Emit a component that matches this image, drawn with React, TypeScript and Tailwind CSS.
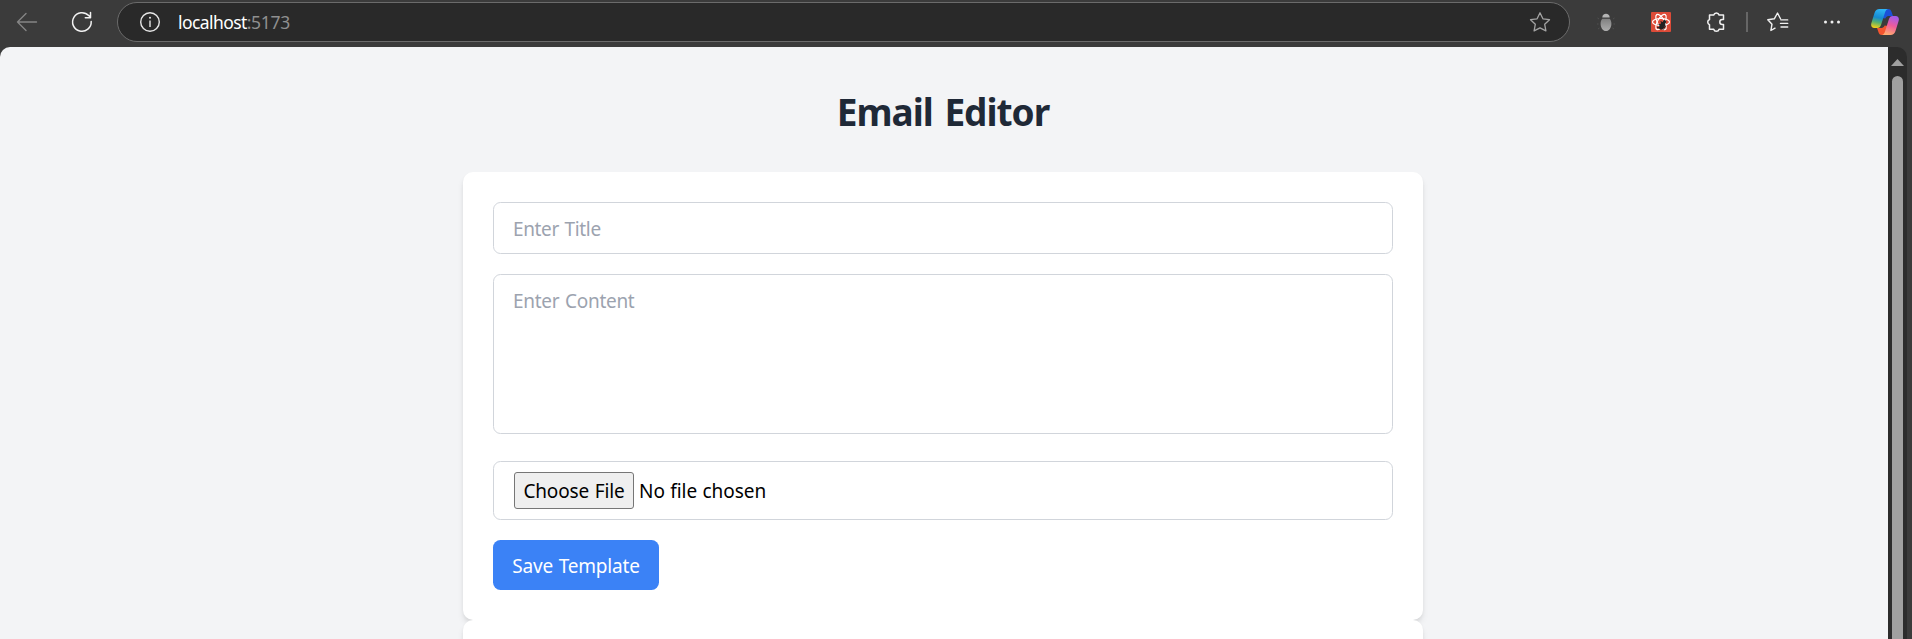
import React from "react";

function BackIcon() {
  return (
    <svg className="h-6 w-6" viewBox="0 0 24 24" fill="none" stroke="#858585" strokeWidth="1.4" strokeLinecap="round" strokeLinejoin="round">
      <path d="M21.5 12H2.5M11 3.5L2.5 12l8.5 8.5" />
    </svg>
  );
}

function ReloadIcon() {
  return (
    <svg className="h-6 w-6" viewBox="0 0 24 24" fill="none" stroke="#f2f2f2" strokeWidth="1.5" strokeLinecap="round" strokeLinejoin="round">
      <path d="M21.2 11.5A9.3 9.3 0 1 1 18.700 5.600L20.500 7.500M20.500 2.500v5.200h-5.200" />
    </svg>
  );
}

function InfoIcon() {
  return (
    <svg className="h-6 w-6" viewBox="0 0 24 24" fill="none" stroke="#e6e6e6" strokeWidth="1.4">
      <circle cx="12" cy="12" r="9.3" />
      <path d="M12 10.5v6.5" />
      <circle cx="12" cy="7.8" r="1" fill="#e6e6e6" stroke="none" />
    </svg>
  );
}

function StarIcon() {
  return (
    <svg className="h-6 w-6" viewBox="0 0 24 24" fill="none" stroke="#a3a3a3" strokeWidth="1.3" strokeLinejoin="round">
      <path d="M12 2.8l2.9 6 6.6.9-4.8 4.6 1.2 6.600-5.900-3.100-5.900 3.100 1.200-6.600L2.500 9.700l6.600-.9z" />
    </svg>
  );
}

function BugIcon() {
  return (
    <svg className="h-6 w-6" viewBox="0 0 24 24">
      <defs>
        <linearGradient id="bug" x1="0" y1="0" x2="0" y2="1">
          <stop offset="0" stopColor="#808080" />
          <stop offset="1" stopColor="#adadad" />
        </linearGradient>
      </defs>
      <path d="M5 9L3.500 8M4.500 14H3M5.500 18l-1.500 1M19 9l1.500-1M19.500 14H21M18.500 18l1.500 1" stroke="#505050" strokeWidth="1" />
      <path d="M8.300 7.500C8.300 5 10 3.800 12 3.800s3.700 1.200 3.700 3.700z" fill="#b5b5b5" />
      <path d="M8.300 8.700h7.400c1.200 1.300 1.700 3 1.700 5 0 4-2.300 7.300-5.400 7.300s-5.400-3.300-5.400-7.300c0-2 .5-3.700 1.700-5z" fill="url(#bug)" />
    </svg>
  );
}

function ReactBugIcon() {
  return (
    <svg className="h-5 w-5" viewBox="0 0 20 20" fill="none">
      <rect width="20" height="20" rx="1" fill="#dc4b38" />
      <g stroke="#fff" strokeWidth="1.2">
        <ellipse cx="10" cy="10" rx="8.500" ry="3.500" />
        <ellipse cx="10" cy="10" rx="8.500" ry="3.500" transform="rotate(60 10 10)" />
        <ellipse cx="10" cy="10" rx="8.500" ry="3.500" transform="rotate(120 10 10)" />
      </g>
      <g transform="rotate(30 11 13)" stroke="#222" strokeWidth="1.100">
        <ellipse cx="11.500" cy="13.500" rx="2" ry="3.600" fill="#222" />
        <circle cx="11.500" cy="8.800" r="1.100" fill="#222" />
        <path d="M8 10.500l7 2M7.700 14h7.800M8 17.500l7-2" />
      </g>
    </svg>
  );
}

function PuzzleIcon() {
  return (
    <svg className="h-6 w-6" viewBox="0 0 24 24" fill="none" stroke="#f0f0f0" strokeWidth="1.500" strokeLinejoin="round">
      <path d="M5.500 5h4.200a2.800 2.800 0 0 1 5.400 0h4.400v4.600h-1.200a2.500 2.500 0 0 0 0 5h1.200v4.700h-4.400a2.800 2.800 0 0 1-5.400 0H5.500v-4.600a2.800 2.800 0 0 1 0-5.200z" />
    </svg>
  );
}

function FavoritesIcon() {
  return (
    <svg className="h-6 w-6" viewBox="0 0 24 24" fill="none" stroke="#f0f0f0" strokeWidth="1.400" strokeLinecap="round" strokeLinejoin="round">
      <path d="M8 18.200l-4.100 2.300 1.100-6.300L.800 9.700l6.500-.9L10.500 3l3 5.800M14 9.900h6.700M13.500 13.400h7.200M14 17h6.700" transform="translate(1 0)" />
    </svg>
  );
}

function CopilotIcon() {
  return (
    <svg className="h-[26px] w-7" viewBox="0 0 28 26">
      <defs>
        <linearGradient id="coolRibbon" x1="0.5" y1="0" x2="0.3" y2="1">
          <stop offset="0" stopColor="#2eb4f5" />
          <stop offset="0.45" stopColor="#168ad0" />
          <stop offset="0.7" stopColor="#56b070" />
          <stop offset="1" stopColor="#f4cf18" />
        </linearGradient>
        <linearGradient id="warmRibbon" x1="0.7" y1="0" x2="0.4" y2="1">
          <stop offset="0" stopColor="#a05cf0" />
          <stop offset="0.5" stopColor="#ee5b9b" />
          <stop offset="1" stopColor="#ffab70" />
        </linearGradient>
      </defs>
      <path d="M14 0h3c2.200 0 3 1 3.600 3L22 7h-3.500c-2 0-3.300.5-4.200 2.500L11 9z" fill="#1b50d8" />
      <path d="M14 26h-3c-2.200 0-3-1-3.600-3L6 19h3.500c2 0 3.300-.5 4.200-2.500L17 17z" fill="#f4552f" />
      <path d="M8.500 0H17c-1.700.4-2.400 1.700-3 3.500L10.200 15.500C9.400 18 8.300 19 6.300 19H3.500C.5 19-.4 16.700.4 14L3.500 4C4.300 1.300 6 0 8.500 0z" fill="url(#coolRibbon)" />
      <path d="M19.500 26H11c1.700-.4 2.400-1.700 3-3.500l3.800-12C18.600 8 19.700 7 21.700 7h2.800c3 0 3.900 2.300 3.100 5L24.500 22c-.8 2.700-2.500 4-5 4z" fill="url(#warmRibbon)" />
    </svg>
  );
}

function BrowserBar() {
  return (
    <header className="flex h-[47px] shrink-0 items-start bg-[#3b3b3b] pt-0.5">
      <div className="flex h-10 w-[117px] items-center gap-[31px] pl-[15px]">
        <BackIcon />
        <ReloadIcon />
      </div>
      <div className="flex h-10 w-[1453px] items-center rounded-full border border-[#6b6b6b] bg-[#292929] pr-[17px] pl-5">
        <InfoIcon />
        <div className="ml-4 flex-1 font-['Noto_Sans'] text-[17.5px] tracking-[-0.58px] text-white">
          localhost<span className="tracking-[-0.3px] text-[#8f8f8f]">:5173</span>
        </div>
        <StarIcon />
      </div>
      <div className="flex h-10 flex-1 items-center">
        <div className="ml-6 flex"><BugIcon /></div>
        <div className="ml-[33px] flex"><ReactBugIcon /></div>
        <div className="ml-[33px] flex"><PuzzleIcon /></div>
        <div className="ml-[18px] h-5 w-0.5 bg-[#666]" />
        <div className="ml-[18px] flex"><FavoritesIcon /></div>
        <svg className="ml-[34px] h-4 w-4" viewBox="0 0 16 16" fill="#f0f0f0">
          <circle cx="1.5" cy="8" r="1.5" />
          <circle cx="8" cy="8" r="1.5" />
          <circle cx="14.5" cy="8" r="1.5" />
        </svg>
        <div className="ml-[31px] flex"><CopilotIcon /></div>
      </div>
    </header>
  );
}

function Scrollbar() {
  return (
    <div className="flex w-6 shrink-0 bg-[#3b3b3b]">
      <div className="flex w-[19px] flex-col items-center rounded-tr-[10px] bg-[#2c2c2c] pt-3">
        <svg className="h-[7px] w-[13px]" viewBox="0 0 13 7" fill="#a0a0a0"><path d="M6.500 0L13 7H0z" /></svg>
        <div className="mt-2.5 w-[11px] flex-1 rounded-t-full bg-[#a0a0a0]" />
      </div>
    </div>
  );
}

const field = "w-full rounded-[7.5px] border border-[#d1d5db]";
const placeholder = "placeholder:text-[#9ca3af] placeholder:opacity-100";

export default function App() {
  return (
    <div className="flex h-[639px] w-[1912px] flex-col overflow-hidden bg-[#3b3b3b] font-['Noto_Sans','Open_Sans',sans-serif]">
      <BrowserBar />
      <div className="flex min-h-0 flex-1">
        <main className="flex min-w-0 flex-1 flex-col items-center overflow-hidden rounded-tl-[10px] bg-[#f3f4f6] pt-10 pr-0.5">
          <h1 className="h-[45px] text-[37px] leading-[49px] font-bold tracking-[-1px] [word-spacing:3px] whitespace-nowrap text-[#1f2937]">Email Editor</h1>
          <section className="mt-10 flex h-[448px] w-[960px] shrink-0 flex-col items-start rounded-[10px] bg-white p-[30px] shadow-[0_5px_7.5px_-1px_rgba(0,0,0,0.1),0_2.5px_5px_-2.5px_rgba(0,0,0,0.1)]">
            <input className={`${field} ${placeholder} h-[52px] px-[19px] pt-0.5 text-[19px] tracking-[-0.35px] [word-spacing:1px]`} placeholder="Enter Title" />
            <textarea className={`${field} ${placeholder} mt-5 h-40 resize-none px-[19px] py-[11px] text-[19px] leading-[30px] tracking-[-0.28px] [word-spacing:1px]`} placeholder="Enter Content" />
            <div className={`${field} mt-[27px] flex h-[59px] items-center px-5 text-[19px] whitespace-nowrap text-black`}>
              <button className="h-[37px] w-[120px] rounded-[3px] border border-[#767676] bg-[#efefef] pt-px tracking-[-0.15px] [word-spacing:1px]">Choose File</button>
              <span className="ml-[5px] pt-0.5 tracking-[-0.05px] [word-spacing:0.5px]">No file chosen</span>
            </div>
            <button className="mt-5 h-[50px] w-[166px] rounded-[7.5px] bg-[#3b82f6] pt-0.5 text-[19px] tracking-[-0.2px] [word-spacing:1px] whitespace-nowrap text-white">Save Template</button>
          </section>
          <section className="h-24 w-[960px] shrink-0 rounded-[10px] bg-white shadow-[0_5px_7.5px_-1px_rgba(0,0,0,0.1),0_2.5px_5px_-2.5px_rgba(0,0,0,0.1)]" />
        </main>
        <Scrollbar />
      </div>
    </div>
  );
}
